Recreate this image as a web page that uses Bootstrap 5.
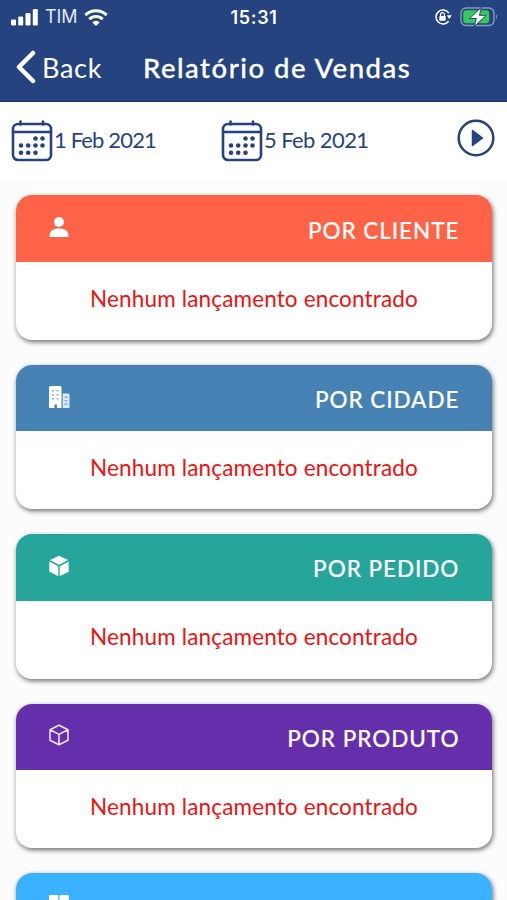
<!DOCTYPE html>
<html lang="pt-BR">
<head>
<meta charset="utf-8">
<meta name="viewport" content="width=device-width, initial-scale=1">
<title>Relatório de Vendas</title>
<link rel="stylesheet" href="https://cdn.jsdelivr.net/npm/bootstrap@5.3.0/dist/css/bootstrap.min.css">
<style>
  html, body { height: 900px; overflow: hidden; }
  body { background: #fcfcfc; font-family: Lato, "Open Sans", sans-serif; color: #24437f; line-height: 1; }
  svg { display: block; flex: none; }
  .app-head { background: #24437f; height: 102px; border-bottom: 1px solid #17316c; }
  .status { height: 34px; padding: 0 9px 0 11px; font-family: Inter, sans-serif; }
  .carrier { font-size: 18px; margin-left: 7px; margin-right: 7px; color: #e3e8f3; letter-spacing: -.1px; }
  .clock { font-size: 18px; font-weight: 600; letter-spacing: .7px; margin-left: -1px; padding-top: 1px; }
  .title-bar { height: 66px; padding-left: 16px; }
  .back { font-size: 27px; width: 107px; letter-spacing: .7px; padding-left: 6px; }
  .page-title { font-size: 27.5px; font-weight: 500; letter-spacing: 1.5px; -webkit-text-stroke: .3px #fff; }
  .filters { height: 79px; padding: 0 12px 5px 11px; background: #fff; }
  .date { width: 210px; font-size: 22px; letter-spacing: -.85px; }
  .date + .date { letter-spacing: -.6px; }
  .date span { padding: 2px 0 0 1px; }
  .date svg { margin-top: 3px; }
  .run { margin-top: -2px; }
  .reports { padding: 14.4px 15px 0 16px; gap: 25px; }
  .report { height: 144.4px; border: 0; border-radius: 16px; overflow: hidden; flex: none; box-shadow: 1px 2px 5px rgba(0,0,0,.58); }
  .report-head { height: 66.5px; padding: 3px 33px 0 32px; }
  .report-head svg { margin-top: -6px; }
  .report-title { font-size: 22.5px; letter-spacing: .95px; margin-right: -.4px; -webkit-text-stroke: .15px #fff; }
  .empty { color: #f01010; font-size: 22.5px; letter-spacing: .15px; padding-bottom: 4px; }
  .c-cliente { background: #ff6347; }
  .c-cidade { background: #4682b4; }
  .c-pedido { background: #26a69a; }
  .c-produto { background: #652fac; }
  .c-fornecedor { background: #3bb2ff; }
  .c-fornecedor .report-title { padding-top: 3px; }
</style>
</head>
<body>
<svg class="d-none">
  <symbol id="calendar" viewBox="0 0 42 42">
    <g fill="none" stroke="#24437f" stroke-width="2.6"><rect x="2" y="4" width="38" height="36" rx="5"/><path d="M2 12h38M9.500 1.500v3M32 1.500v3" stroke-linecap="round"/></g>
    <g fill="#24437f"><circle cx="24.500" cy="18.500" r="2.300"/><circle cx="31.500" cy="18.500" r="2.300"/><circle cx="10" cy="25.500" r="2.300"/><circle cx="17.200" cy="25.500" r="2.300"/><circle cx="24.500" cy="25.500" r="2.300"/><circle cx="31.500" cy="25.500" r="2.300"/><circle cx="10" cy="32.700" r="2.300"/><circle cx="17.200" cy="32.700" r="2.300"/><circle cx="24.500" cy="32.700" r="2.300"/></g>
  </symbol>
</svg>
<header class="app-head text-white">
  <div class="status row g-0 align-items-center">
    <div class="col d-flex align-items-center">
      <svg width="27" height="17" fill="#fff"><rect y="10.500" width="5" height="6" rx="1.300"/><rect x="7.200" y="7.500" width="5" height="9" rx="1.300"/><rect x="14.500" y="4" width="5" height="12.500" rx="1.300"/><rect x="21.800" width="5" height="16.500" rx="1.300"/></svg>
      <span class="carrier">TIM</span>
      <svg width="24" height="17" viewBox="0 0 24 17" fill="none" stroke="#fff" stroke-width="3"><path d="M1.300 6.100a15.200 15.200 0 0 1 21.400 0M5.300 10.200a9.500 9.500 0 0 1 13.400 0"/><path d="M12 17 8.300 13.300a5.200 5.200 0 0 1 7.400 0Z" fill="#fff" stroke="none"/></svg>
    </div>
    <div class="col-auto clock">15:31</div>
    <div class="col d-flex align-items-center justify-content-end">
      <svg width="18" height="18" viewBox="0 0 18 18" class="me-2"><path d="M14.900 5.200a7 7 0 1 0-.3 8" fill="none" stroke="#fff" stroke-width="1.500"/><path d="m12.800 7.300 5 0-2.500 3.700Z" fill="#fff"/><rect x="5.300" y="8" width="6.400" height="4.800" rx=".8" fill="#fff"/><path d="M6.600 8V6.600a1.900 1.900 0 0 1 3.800 0V8" fill="none" stroke="#fff" stroke-width="1.200"/></svg>
      <svg width="38" height="20" viewBox="0 0 38 20"><rect x="1" y="1" width="33" height="17.500" rx="5" fill="none" stroke="#8799bd" stroke-width="1.400"/><rect x="3.200" y="3.300" width="26" height="13" rx="3" fill="#33ca58"/><path d="M36 7v5.500q2-2.700 0-5.500" fill="#8799bd"/><path d="M21.500.3 9.500 11.500h6.800L14.300 19.500 26.200 8.300h-6.800Z" fill="#fff" stroke="#24437f" stroke-width="1"/></svg>
    </div>
  </div>
  <div class="title-bar d-flex align-items-center">
    <svg width="20" height="34" viewBox="0 0 20 34" fill="none" stroke="#fff" stroke-width="4.500" stroke-linecap="round" stroke-linejoin="round"><path d="M17 3 3 17l14 14"/></svg>
    <span class="back">Back</span>
    <h1 class="page-title mb-0">Relatório de Vendas</h1>
  </div>
</header>
<section class="filters d-flex align-items-center">
  <div class="date d-flex align-items-center"><svg width="42" height="42"><use href="#calendar"/></svg><span>1 Feb 2021</span></div>
  <div class="date d-flex align-items-center"><svg width="42" height="42"><use href="#calendar"/></svg><span>5 Feb 2021</span></div>
  <svg class="run ms-auto" width="38" height="38" viewBox="0 0 38 38"><circle cx="19" cy="19" r="17.300" fill="none" stroke="#24437f" stroke-width="2.500"/><path d="m15.500 11.500 10 7.500-10 7.500Z" fill="#24437f" stroke="#24437f" stroke-width="1.500" stroke-linejoin="round"/></svg>
</section>
<main class="reports d-flex flex-column">
  <article class="card report">
    <div class="report-head c-cliente text-white d-flex align-items-center justify-content-between">
      <svg width="22" height="22" viewBox="0 0 22 22" fill="#fff"><circle cx="11" cy="6" r="5"/><path d="M1.500 21v-1.500c0-4.500 4-7 9.500-7s9.500 2.500 9.500 7V21Z"/></svg>
      <h2 class="report-title mb-0">POR CLIENTE</h2>
    </div>
    <div class="empty flex-fill d-flex align-items-center justify-content-center">Nenhum lançamento encontrado</div>
  </article>
  <article class="card report">
    <div class="report-head c-cidade text-white d-flex align-items-center justify-content-between">
      <svg width="22" height="22" viewBox="0 0 22 22"><path d="M1 1.500Q1 0 2.500 0h9.500q1.500 0 1.500 1.500V22H9v-3.500H6.500V22H1Z" fill="#fff"/><path d="M14.700 7.500H20q1.500 0 1.500 1.500v13h-6.800Z" fill="#dbe9f5"/><path d="M4 4h2v1.500H4Zm4.500 0h2v1.500h-2ZM4 8h2v1.500H4Zm4.500 0h2v1.500h-2ZM4 12h2v1.500H4Zm4.500 0h2v1.500h-2ZM16.500 10.500h3V12h-3Zm0 3.500h3v1.500h-3Zm0 3.500h3V19h-3Z" fill="#86aed0"/></svg>
      <h2 class="report-title mb-0">POR CIDADE</h2>
    </div>
    <div class="empty flex-fill d-flex align-items-center justify-content-center">Nenhum lançamento encontrado</div>
  </article>
  <article class="card report">
    <div class="report-head c-pedido text-white d-flex align-items-center justify-content-between">
      <svg width="22" height="22" viewBox="0 0 22 22" fill="#fff"><path d="M11 .8 20 5l-9 4.700L2 5ZM1.300 6.500l9 4.700v10l-9-4.500ZM20.700 6.500l-9 4.700v10l9-4.500Z"/></svg>
      <h2 class="report-title mb-0">POR PEDIDO</h2>
    </div>
    <div class="empty flex-fill d-flex align-items-center justify-content-center">Nenhum lançamento encontrado</div>
  </article>
  <article class="card report">
    <div class="report-head c-produto text-white d-flex align-items-center justify-content-between">
      <svg width="22" height="22" viewBox="0 0 22 22" fill="none" stroke="#f0e4fb" stroke-width="1.600" stroke-linejoin="round"><path d="m11 1.300 9 4.500v10.400l-9 4.500-9-4.500V5.800ZM2 5.800l9 4.600 9-4.600M11 10.400v10.300"/></svg>
      <h2 class="report-title mb-0">POR PRODUTO</h2>
    </div>
    <div class="empty flex-fill d-flex align-items-center justify-content-center">Nenhum lançamento encontrado</div>
  </article>
  <article class="card report">
    <div class="report-head c-fornecedor text-white d-flex align-items-center justify-content-between">
      <svg width="22" height="22" viewBox="0 0 22 22" fill="#fff"><rect x="1" y="1" width="9.300" height="9" rx="1"/><rect x="11.500" y="1" width="9.300" height="9" rx="1"/><rect x="1" y="12" width="9.300" height="9" rx="1"/><rect x="11.500" y="12" width="9.300" height="9" rx="1"/></svg>
      <h2 class="report-title mb-0">POR FORNECEDOR</h2>
    </div>
    <div class="empty flex-fill d-flex align-items-center justify-content-center">Nenhum lançamento encontrado</div>
  </article>
</main>
<script src="https://cdn.jsdelivr.net/npm/bootstrap@5.3.0/dist/js/bootstrap.bundle.min.js"></script>
</body>
</html>
